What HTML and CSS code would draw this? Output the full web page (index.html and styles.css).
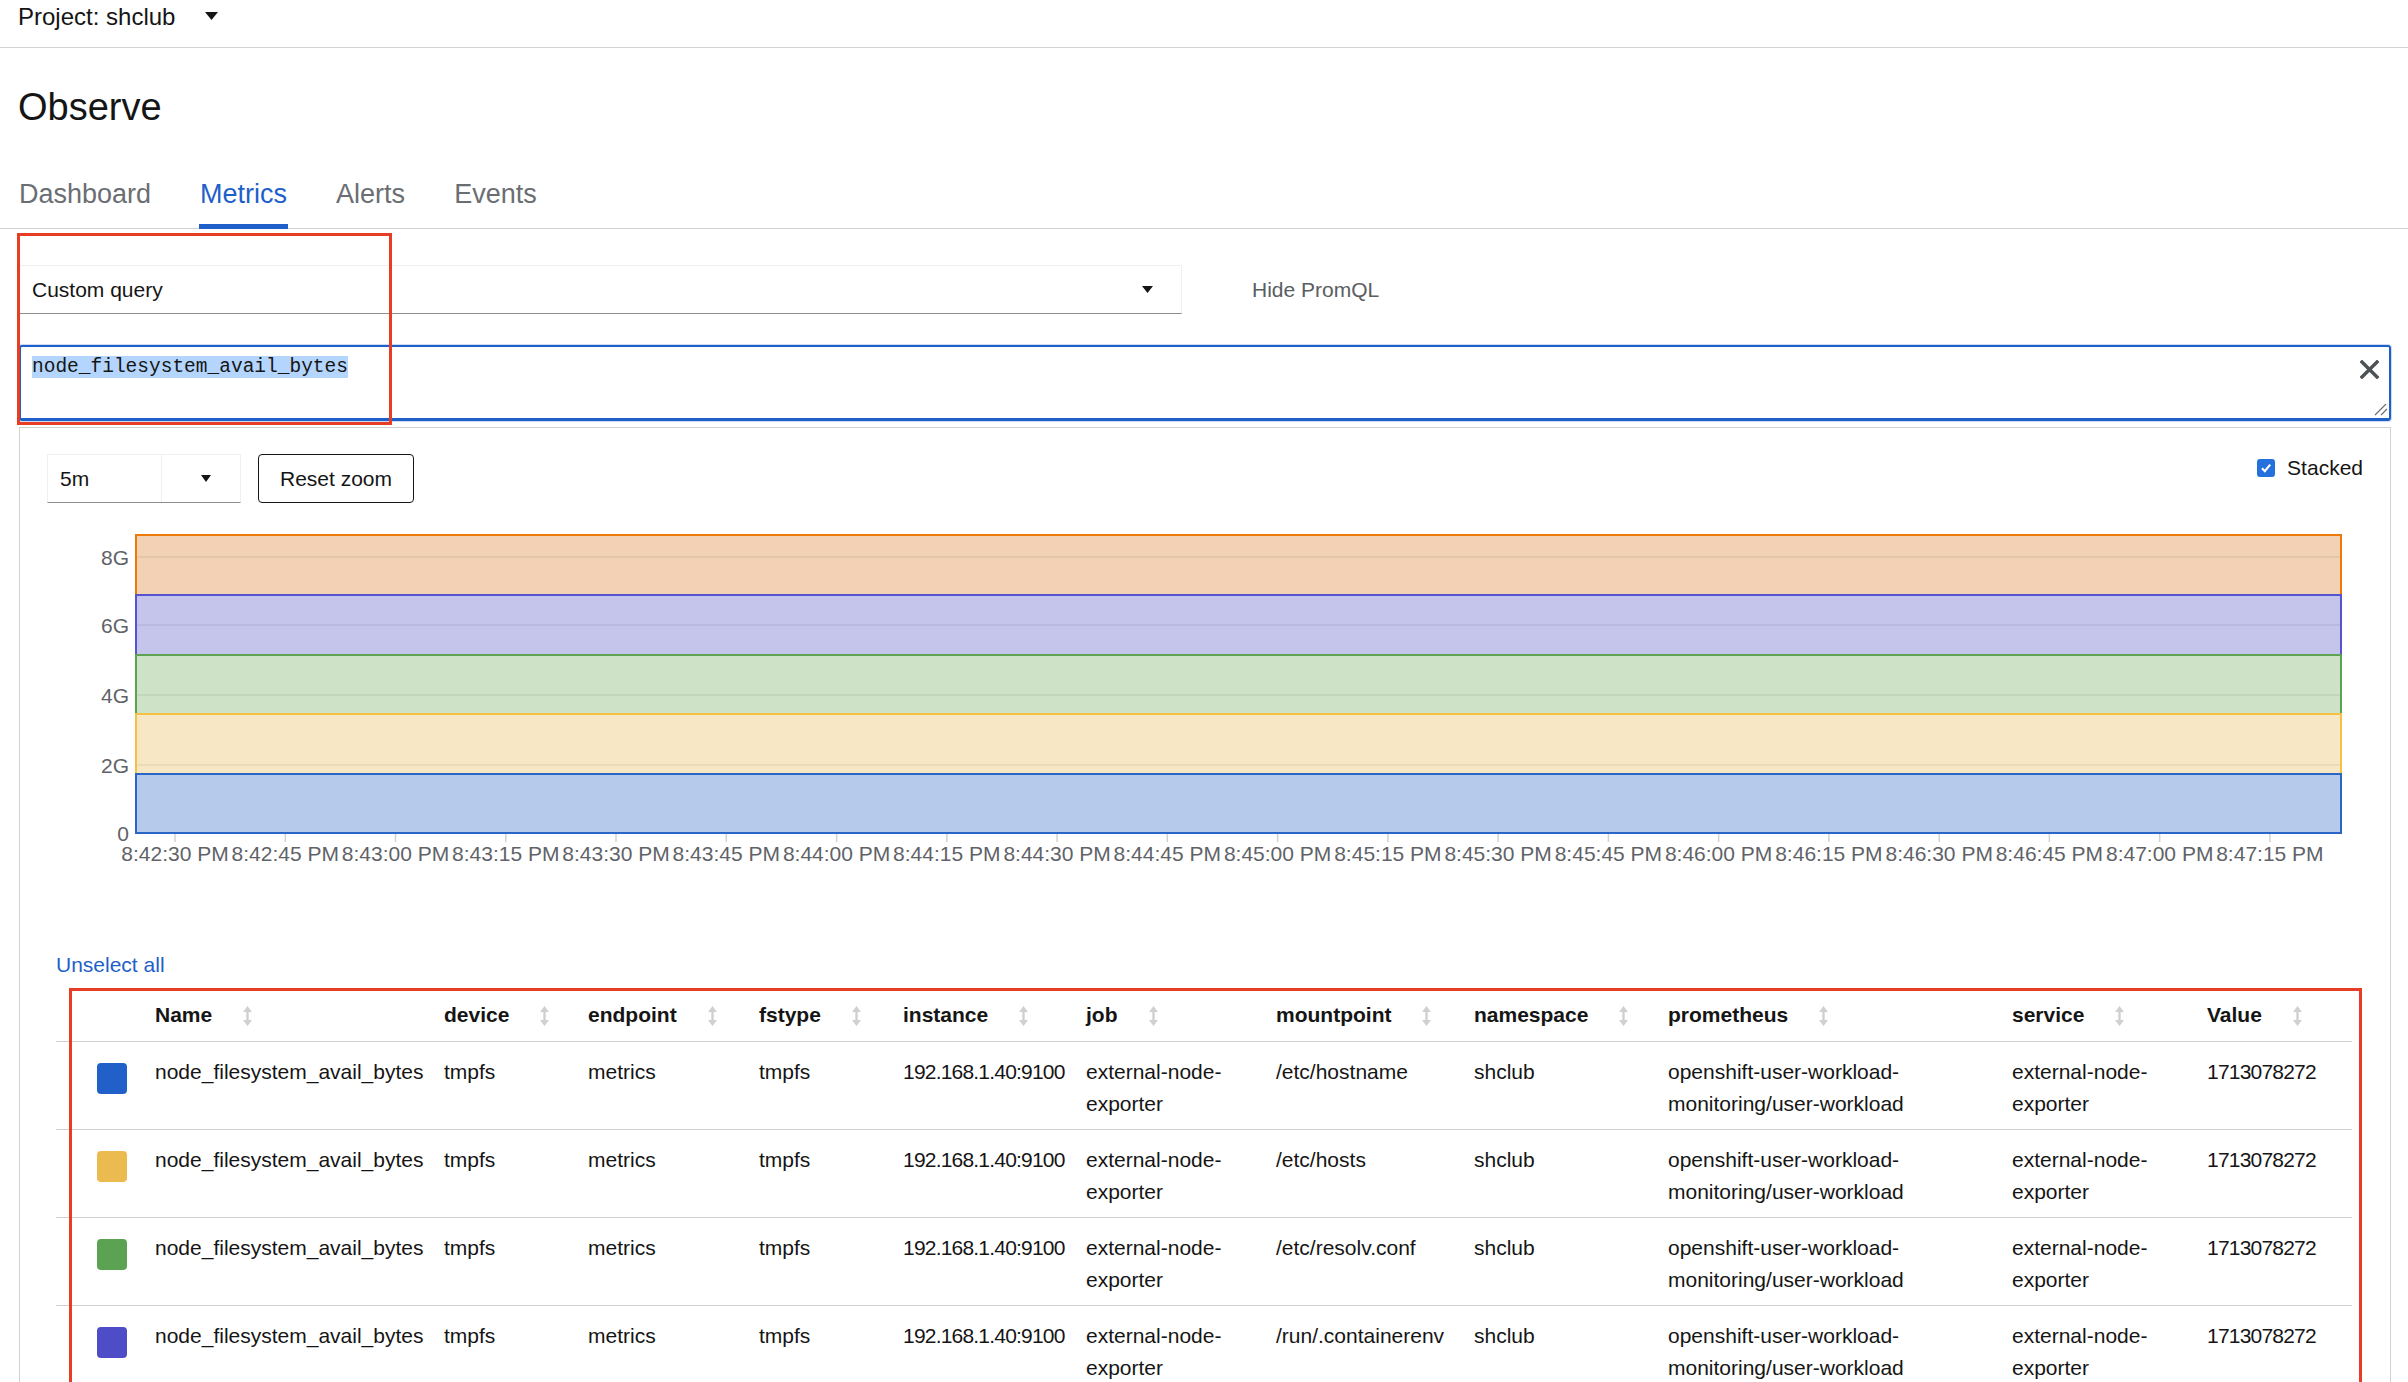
FILE: index.html
```html
<!DOCTYPE html>
<html lang="en">
<head>
<meta charset="utf-8">
<title>Observe · Metrics</title>
<link rel="stylesheet" href="styles.css">
</head>
<body>
<header class="topbar">
  <span class="project">Project: shclub</span>
  <svg class="caret-lg" width="13" height="8" viewBox="0 0 13 8"><path d="M0 0H13L6.5 8Z"/></svg>
</header>

<section class="page-head">
  <h1 class="title">Observe</h1>
  <nav class="tabs">
    <a class="tab">Dashboard</a>
    <a class="tab active">Metrics</a>
    <a class="tab">Alerts</a>
    <a class="tab">Events</a>
  </nav>
</section>

<main class="content">
  <section class="query">
    <div class="query-row">
      <div class="select">
        <span>Custom query</span>
        <svg class="caret-sm" width="11" height="7" viewBox="0 0 11 7"><path d="M0 0H11L5.5 7Z"/></svg>
      </div>
      <button class="link-btn">Hide PromQL</button>
    </div>
    <div class="expr">
      <div class="expr-text"><span class="sel">node_filesystem_avail_bytes</span></div>
      <button class="clear" aria-label="Clear">
        <svg width="19" height="19" viewBox="0 0 19 19"><path d="M2 2L17 17M17 2L2 17" stroke="#4f5255" stroke-width="3.4" stroke-linecap="square"/></svg>
      </button>
      <svg class="resize" width="14" height="12" viewBox="0 0 14 12"><path d="M1 11L12 0M7 11L13 5" stroke="#6a6e73" stroke-width="1.2"/></svg>
    </div>
    <div class="annot annot-query"></div>
  </section>

  <section class="card">
    <div class="toolbar">
      <div class="span-select">
        <span class="span-val">5m</span>
        <span class="span-toggle"><svg width="10" height="7" viewBox="0 0 10 7"><path d="M0 0H10L5 7Z"/></svg></span>
      </div>
      <button class="btn">Reset zoom</button>
      <label class="stacked">
        <span class="cb"><svg width="12" height="12" viewBox="0 0 12 12"><path d="M2 6.3L4.8 9.2L10.2 2.6" fill="none" stroke="#fff" stroke-width="2.2"/></svg></span>
        Stacked
      </label>
    </div>

    <svg class="chart" width="2315" height="360" viewBox="0 0 2315 360">
      <rect x="89" y="15" width="2205" height="60" fill="#f3d1b5" stroke="#ec7a08" stroke-width="2"/>
      <rect x="89" y="75" width="2205" height="60" fill="#c5c5ec" stroke="#5752d1" stroke-width="2"/>
      <rect x="89" y="135" width="2205" height="59" fill="#cde2c6" stroke="#5ba352" stroke-width="2"/>
      <rect x="89" y="194" width="2205" height="60" fill="#f8e7c5" stroke="#f4c145" stroke-width="2"/>
      <rect x="89" y="254" width="2205" height="59" fill="#b6caeb" stroke="#2b65c6" stroke-width="2"/>
      <g class="grid">
        <line x1="90" y1="37" x2="2293" y2="37"/>
        <line x1="90" y1="105" x2="2293" y2="105"/>
        <line x1="90" y1="175" x2="2293" y2="175"/>
        <line x1="90" y1="245" x2="2293" y2="245"/>
      </g>
      <g class="ylabels">
        <text x="82" y="44.5">8G</text>
        <text x="82" y="112.5">6G</text>
        <text x="82" y="182.5">4G</text>
        <text x="82" y="252.5">2G</text>
        <text x="82" y="320.5">0</text>
      </g>
      <g class="ticks">
        <line x1="128" y1="314" x2="128" y2="322"/>
        <line x1="238.3" y1="314" x2="238.3" y2="322"/>
        <line x1="348.5" y1="314" x2="348.5" y2="322"/>
        <line x1="458.8" y1="314" x2="458.8" y2="322"/>
        <line x1="569" y1="314" x2="569" y2="322"/>
        <line x1="679.3" y1="314" x2="679.3" y2="322"/>
        <line x1="789.6" y1="314" x2="789.6" y2="322"/>
        <line x1="899.8" y1="314" x2="899.8" y2="322"/>
        <line x1="1010.1" y1="314" x2="1010.1" y2="322"/>
        <line x1="1120.3" y1="314" x2="1120.3" y2="322"/>
        <line x1="1230.6" y1="314" x2="1230.6" y2="322"/>
        <line x1="1340.9" y1="314" x2="1340.9" y2="322"/>
        <line x1="1451.1" y1="314" x2="1451.1" y2="322"/>
        <line x1="1561.4" y1="314" x2="1561.4" y2="322"/>
        <line x1="1671.6" y1="314" x2="1671.6" y2="322"/>
        <line x1="1781.9" y1="314" x2="1781.9" y2="322"/>
        <line x1="1892.2" y1="314" x2="1892.2" y2="322"/>
        <line x1="2002.4" y1="314" x2="2002.4" y2="322"/>
        <line x1="2112.7" y1="314" x2="2112.7" y2="322"/>
        <line x1="2222.9" y1="314" x2="2222.9" y2="322"/>
      </g>
      <g class="xlabels">
        <text x="128" y="341">8:42:30 PM</text>
        <text x="238.3" y="341">8:42:45 PM</text>
        <text x="348.5" y="341">8:43:00 PM</text>
        <text x="458.8" y="341">8:43:15 PM</text>
        <text x="569" y="341">8:43:30 PM</text>
        <text x="679.3" y="341">8:43:45 PM</text>
        <text x="789.6" y="341">8:44:00 PM</text>
        <text x="899.8" y="341">8:44:15 PM</text>
        <text x="1010.1" y="341">8:44:30 PM</text>
        <text x="1120.3" y="341">8:44:45 PM</text>
        <text x="1230.6" y="341">8:45:00 PM</text>
        <text x="1340.9" y="341">8:45:15 PM</text>
        <text x="1451.1" y="341">8:45:30 PM</text>
        <text x="1561.4" y="341">8:45:45 PM</text>
        <text x="1671.6" y="341">8:46:00 PM</text>
        <text x="1781.9" y="341">8:46:15 PM</text>
        <text x="1892.2" y="341">8:46:30 PM</text>
        <text x="2002.4" y="341">8:46:45 PM</text>
        <text x="2112.7" y="341">8:47:00 PM</text>
        <text x="2222.9" y="341">8:47:15 PM</text>
      </g>
    </svg>

    <div class="legend">
      <a class="unselect">Unselect all</a>
      <table class="series">
        <colgroup>
          <col style="width:99px"><col style="width:289px"><col style="width:144px"><col style="width:171px">
          <col style="width:144px"><col style="width:183px"><col style="width:190px"><col style="width:198px">
          <col style="width:194px"><col style="width:344px"><col style="width:195px"><col style="width:145px">
        </colgroup>
        <thead>
          <tr>
            <th></th>
            <th>Name<svg class="sort" width="9" height="20" viewBox="0 0 9 20"><path d="M4.5 0L9 6H5.7V14H9L4.5 20L0 14H3.3V6H0Z"/></svg></th>
            <th>device<svg class="sort" width="9" height="20" viewBox="0 0 9 20"><path d="M4.5 0L9 6H5.7V14H9L4.5 20L0 14H3.3V6H0Z"/></svg></th>
            <th>endpoint<svg class="sort" width="9" height="20" viewBox="0 0 9 20"><path d="M4.5 0L9 6H5.7V14H9L4.5 20L0 14H3.3V6H0Z"/></svg></th>
            <th>fstype<svg class="sort" width="9" height="20" viewBox="0 0 9 20"><path d="M4.5 0L9 6H5.7V14H9L4.5 20L0 14H3.3V6H0Z"/></svg></th>
            <th>instance<svg class="sort" width="9" height="20" viewBox="0 0 9 20"><path d="M4.5 0L9 6H5.7V14H9L4.5 20L0 14H3.3V6H0Z"/></svg></th>
            <th>job<svg class="sort" width="9" height="20" viewBox="0 0 9 20"><path d="M4.5 0L9 6H5.7V14H9L4.5 20L0 14H3.3V6H0Z"/></svg></th>
            <th>mountpoint<svg class="sort" width="9" height="20" viewBox="0 0 9 20"><path d="M4.5 0L9 6H5.7V14H9L4.5 20L0 14H3.3V6H0Z"/></svg></th>
            <th>namespace<svg class="sort" width="9" height="20" viewBox="0 0 9 20"><path d="M4.5 0L9 6H5.7V14H9L4.5 20L0 14H3.3V6H0Z"/></svg></th>
            <th>prometheus<svg class="sort" width="9" height="20" viewBox="0 0 9 20"><path d="M4.5 0L9 6H5.7V14H9L4.5 20L0 14H3.3V6H0Z"/></svg></th>
            <th>service<svg class="sort" width="9" height="20" viewBox="0 0 9 20"><path d="M4.5 0L9 6H5.7V14H9L4.5 20L0 14H3.3V6H0Z"/></svg></th>
            <th>Value<svg class="sort" width="9" height="20" viewBox="0 0 9 20"><path d="M4.5 0L9 6H5.7V14H9L4.5 20L0 14H3.3V6H0Z"/></svg></th>
          </tr>
        </thead>
        <tbody>
          <tr>
            <td class="sw-cell"><span class="swatch sw-blue"></span></td>
            <td>node_filesystem_avail_bytes</td><td>tmpfs</td><td>metrics</td><td>tmpfs</td>
            <td class="num">192.168.1.40:9100</td><td>external-node-exporter</td><td>/etc/hostname</td><td>shclub</td>
            <td>openshift-user-workload-monitoring/user-workload</td><td>external-node-exporter</td><td class="num">1713078272</td>
          </tr>
          <tr>
            <td class="sw-cell"><span class="swatch sw-yellow"></span></td>
            <td>node_filesystem_avail_bytes</td><td>tmpfs</td><td>metrics</td><td>tmpfs</td>
            <td class="num">192.168.1.40:9100</td><td>external-node-exporter</td><td>/etc/hosts</td><td>shclub</td>
            <td>openshift-user-workload-monitoring/user-workload</td><td>external-node-exporter</td><td class="num">1713078272</td>
          </tr>
          <tr>
            <td class="sw-cell"><span class="swatch sw-green"></span></td>
            <td>node_filesystem_avail_bytes</td><td>tmpfs</td><td>metrics</td><td>tmpfs</td>
            <td class="num">192.168.1.40:9100</td><td>external-node-exporter</td><td>/etc/resolv.conf</td><td>shclub</td>
            <td>openshift-user-workload-monitoring/user-workload</td><td>external-node-exporter</td><td class="num">1713078272</td>
          </tr>
          <tr>
            <td class="sw-cell"><span class="swatch sw-purple"></span></td>
            <td>node_filesystem_avail_bytes</td><td>tmpfs</td><td>metrics</td><td>tmpfs</td>
            <td class="num">192.168.1.40:9100</td><td>external-node-exporter</td><td>/run/.containerenv</td><td>shclub</td>
            <td>openshift-user-workload-monitoring/user-workload</td><td>external-node-exporter</td><td class="num">1713078272</td>
          </tr>
        </tbody>
      </table>
      <div class="annot annot-table"></div>
    </div>
  </section>
</main>
</body>
</html>
```

FILE: styles.css
```css
* { box-sizing: border-box; }

html, body { background: #fff; }

body {
  margin: 0;
  font-family: "Liberation Sans", Arial, sans-serif;
  font-size: 21px;
  color: #151515;
}

button {
  font-family: inherit;
  font-size: inherit;
  color: inherit;
  cursor: pointer;
}

/* ---------- top bar ---------- */
.topbar {
  height: 48px;
  border-bottom: 1px solid #d2d2d2;
  display: flex;
  align-items: flex-start;
  padding: 2px 0 0 18px;
}
.project {
  font-size: 24px;
  line-height: 29px;
}
.caret-lg {
  margin: 10px 0 0 30px;
  fill: #151515;
}

/* ---------- page heading + tabs ---------- */
.title {
  margin: 37px 0 0 18px;
  font-size: 38px;
  line-height: 44px;
  font-weight: 400;
  color: #151515;
}
.tabs {
  margin-top: 38px;
  display: flex;
  gap: 49px;
  padding-left: 19px;
  border-bottom: 1px solid #d2d2d2;
}
.tab {
  position: relative;
  font-size: 27px;
  line-height: 31px;
  padding: 12px 0 18px;
  color: #6a6e73;
}
.tab.active { color: #1f5fc9; }
.tab.active::after {
  content: "";
  position: absolute;
  left: -1px;
  right: -1px;
  bottom: -1px;
  height: 5px;
  background: #1f5fc9;
}

/* ---------- query editor ---------- */
.query {
  position: relative;
  padding: 36px 17px 0 19px;
}
.query-row {
  display: flex;
  align-items: center;
}
.select {
  width: 1163px;
  height: 49px;
  border: 1px solid #f0f0f0;
  border-bottom-color: #8a8d90;
  display: flex;
  align-items: center;
  justify-content: space-between;
  padding: 0 28px 0 12px;
  line-height: 25px;
}
.caret-sm { fill: #151515; }
.link-btn {
  margin-left: 70px;
  background: none;
  border: none;
  padding: 0;
  color: #5a5d61;
  line-height: 25px;
}
.expr {
  position: relative;
  margin-top: 31px;
  height: 76px;
  border: 2px solid #1f5fc9;
  border-bottom-width: 3px;
  border-radius: 3px;
  box-shadow: 0 0 0 1px rgba(31, 95, 201, 0.22);
  display: flex;
  align-items: flex-start;
  padding: 6px 10px 0 11px;
}
.expr-text {
  flex: 1;
  font-family: "Liberation Mono", "DejaVu Sans Mono", monospace;
  font-size: 19.5px;
  line-height: 29px;
  color: #151515;
}
.sel { background: #b4d5fd; }
.clear {
  margin-top: 7px;
  width: 19px;
  height: 19px;
  padding: 0;
  border: none;
  background: none;
  display: flex;
}
.resize {
  position: absolute;
  right: 1px;
  bottom: 2px;
}
.annot {
  position: absolute;
  border: 3px solid #e63d24;
  pointer-events: none;
}
.annot-query {
  left: 17px;
  top: 4px;
  width: 375px;
  height: 192px;
}

/* ---------- graph card ---------- */
.card {
  margin: 6px 17px 0 19px;
  border: 1px solid #d2d2d2;
  border-bottom: none;
  padding: 26px 27px 60px;
}
.toolbar {
  display: flex;
  align-items: flex-start;
}
.span-select {
  display: flex;
  width: 194px;
  height: 49px;
  border: 1px solid #f0f0f0;
  border-bottom-color: #8a8d90;
}
.span-val {
  width: 114px;
  border-right: 1px solid #f0f0f0;
  padding-left: 12px;
  display: flex;
  align-items: center;
}
.span-toggle {
  flex: 1;
  display: flex;
  align-items: center;
  justify-content: center;
  padding-left: 10px;
  fill: #151515;
}
.btn {
  margin-left: 17px;
  width: 156px;
  height: 49px;
  border: 1px solid #151515;
  border-radius: 4px;
  background: #fff;
  padding: 0;
}
.stacked {
  margin-left: auto;
  margin-top: 1px;
  display: flex;
  align-items: center;
  gap: 12px;
  line-height: 26px;
}
.cb {
  width: 18px;
  height: 18px;
  border-radius: 3px;
  background: #2470dc;
  display: flex;
  align-items: center;
  justify-content: center;
}

/* chart */
.chart {
  display: block;
  margin-top: 17px;
  font-family: "Liberation Sans", Arial, sans-serif;
  font-size: 21px;
}
.grid line { stroke: rgba(0, 0, 0, 0.07); stroke-width: 1.5; }
.ticks line { stroke: #d2d2d2; stroke-width: 1.5; }
.ylabels text { fill: #5f6368; text-anchor: end; }
.xlabels text { fill: #5f6368; text-anchor: middle; }

/* legend table */
.legend {
  position: relative;
  margin-top: 69px;
  padding-left: 9px;
}
.unselect {
  display: block;
  line-height: 32px;
  color: #1f5fc9;
}
.series {
  margin-top: 7px;
  width: 2296px;
  table-layout: fixed;
  border-collapse: collapse;
}
.series th {
  text-align: left;
  font-weight: 700;
  line-height: 32px;
  padding: 11px 16px 10px 0;
  border-bottom: 1px solid #d2d2d2;
  white-space: nowrap;
}
.sort {
  fill: #d0d0d0;
  margin-left: 31px;
  vertical-align: -4px;
}
.series td {
  vertical-align: top;
  line-height: 32px;
  padding: 14px 16px 9px 0;
  border-bottom: 1px solid #d2d2d2;
  color: #151515;
}
.series td.num { letter-spacing: -0.8px; }
.series td.sw-cell { padding-left: 41px; }
.swatch {
  display: block;
  width: 30px;
  height: 31px;
  margin-top: 7px;
  border-radius: 4px;
}
.sw-blue { background: #2060c8; }
.sw-yellow { background: #ecbb4f; }
.sw-green { background: #5ba352; }
.sw-purple { background: #4f4cc8; }
.annot-table {
  left: 22px;
  top: 39px;
  width: 2293px;
  height: 600px;
}
```
